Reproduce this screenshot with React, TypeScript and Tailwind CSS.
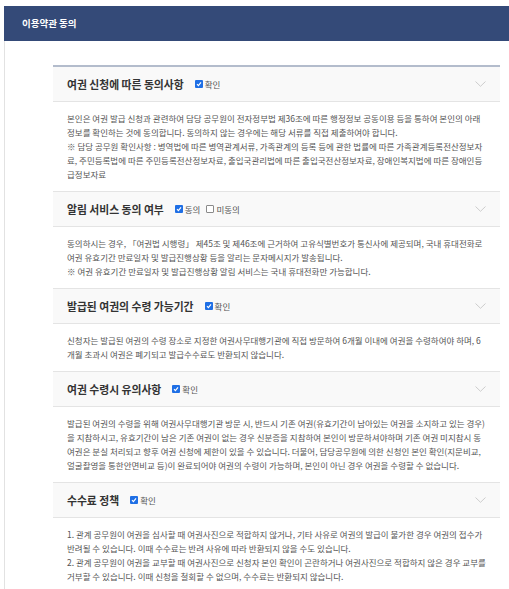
import type { ReactNode } from "react";

const FONT = { fontFamily: '"Noto Sans CJK KR", "Noto Sans", sans-serif' };

function Check({ checked }: { checked: boolean }) {
  if (!checked) {
    return <span className="inline-block w-[8px] h-[8px] rounded-[1px] border border-[#8a8a8a] bg-white" />;
  }
  return (
    <span className="inline-flex items-center justify-center w-[8px] h-[8px] rounded-[1px] bg-[#1f6fe5]">
      <svg width="6" height="6" viewBox="0 0 6 6">
        <polyline points="1,3.2 2.4,4.6 5,1.4" fill="none" stroke="#fff" strokeWidth="1.2" />
      </svg>
    </span>
  );
}

function Option({ checked, label }: { checked: boolean; label: string }) {
  return (
    <span className="flex items-center gap-[2px] text-[8.5px] text-[#555]">
      <Check checked={checked} />
      {label}
    </span>
  );
}

function Section({ title, options, children }: { title: string; options: { label: string; checked: boolean }[]; children: ReactNode }) {
  return (
    <div className="border-b border-[#e4e4e4]">
      <div className="h-[35px] flex items-center bg-[#f9f9f9] border-b border-[#e4e4e4] pl-[14px] pr-[14px]">
        <span className="text-[10.8px] font-bold text-[#333]">{title}</span>
        <div className="flex items-center gap-[6px] ml-[11px]">
          {options.map((o) => (
            <Option key={o.label} checked={o.checked} label={o.label} />
          ))}
        </div>
        <svg className="ml-auto" width="11" height="6" viewBox="0 0 11 6">
          <polyline points="0.5,0.5 5.5,5.3 10.5,0.5" fill="none" stroke="#cdcdcd" strokeWidth="1" />
        </svg>
      </div>
      <div className="pl-[14px] pr-[12px] pt-[9px] pb-[10px] text-[8.5px] leading-[14px] text-[#555] break-all">{children}</div>
    </div>
  );
}

export default function App() {
  return (
    <div className="min-h-screen bg-white pt-[6px] pl-[4px]" style={FONT}>
      <div className="h-[35px] flex items-center bg-[#344a78] pl-[18px]">
        <h1 className="text-[9.5px] font-bold text-white">이용약관 동의</h1>
      </div>
      <div className="border-l border-[#e2e2e2] pt-[24px] pl-[48px] pr-[9px] pb-[20px]">
        <div className="border-t-2 border-[#b3bccc]">
          <Section title="여권 신청에 따른 동의사항" options={[{ label: "확인", checked: true }]}>
            본인은 여권 발급 신청과 관련하여 담당 공무원이 전자정부법 제36조에 따른 행정정보 공동이용 등을 통하여 본인의 아래 정보를 확인하는 것에 동의합니다. 동의하지 않는 경우에는 해당 서류를 직접 제출하여야 합니다.
            <br />
            ※ 담당 공무원 확인사항 : 병역법에 따른 병역관계서류, 가족관계의 등록 등에 관한 법률에 따른 가족관계등록전산정보자료, 주민등록법에 따른 주민등록전산정보자료, 출입국관리법에 따른 출입국전산정보자료, 장애인복지법에 따른 장애인등급정보자료
          </Section>
          <Section
            title="알림 서비스 동의 여부"
            options={[
              { label: "동의", checked: true },
              { label: "미동의", checked: false },
            ]}
          >
            동의하시는 경우, 「여권법 시행령」 제45조 및 제46조에 근거하여 고유식별번호가 통신사에 제공되며, 국내 휴대전화로 여권 유효기간 만료일자 및 발급진행상황 등을 알리는 문자메시지가 발송됩니다.
            <br />
            ※ 여권 유효기간 만료일자 및 발급진행상황 알림 서비스는 국내 휴대전화만 가능합니다.
          </Section>
          <Section title="발급된 여권의 수령 가능기간" options={[{ label: "확인", checked: true }]}>
            신청자는 발급된 여권의 수령 장소로 지정한 여권사무대행기관에 직접 방문하여 6개월 이내에 여권을 수령하여야 하며, 6개월 초과시 여권은 폐기되고 발급수수료도 반환되지 않습니다.
          </Section>
          <Section title="여권 수령시 유의사항" options={[{ label: "확인", checked: true }]}>
            발급된 여권의 수령을 위해 여권사무대행기관 방문 시, 반드시 기존 여권(유효기간이 남아있는 여권을 소지하고 있는 경우)을 지참하시고, 유효기간이 남은 기존 여권이 없는 경우 신분증을 지참하여 본인이 방문하셔야하며 기존 여권 미지참시 동 여권은 분실 처리되고 향후 여권 신청에 제한이 있을 수 있습니다. 더불어, 담당공무원에 의한 신청인 본인 확인(지문비교, 얼굴촬영을 통한안면비교 등)이 완료되어야 여권의 수령이 가능하며, 본인이 아닌 경우 여권을 수령할 수 없습니다.
          </Section>
          <Section title="수수료 정책" options={[{ label: "확인", checked: true }]}>
            1. 관계 공무원이 여권을 심사할 때 여권사진으로 적합하지 않거나, 기타 사유로 여권의 발급이 불가한 경우 여권의 접수가 반려될 수 있습니다. 이때 수수료는 반려 사유에 따라 반환되지 않을 수도 있습니다.
            <br />
            2. 관계 공무원이 여권을 교부할 때 여권사진으로 신청자 본인 확인이 곤란하거나 여권사진으로 적합하지 않은 경우 교부를 거부할 수 있습니다. 이때 신청을 철회할 수 없으며, 수수료는 반환되지 않습니다.
          </Section>
        </div>
      </div>
    </div>
  );
}
